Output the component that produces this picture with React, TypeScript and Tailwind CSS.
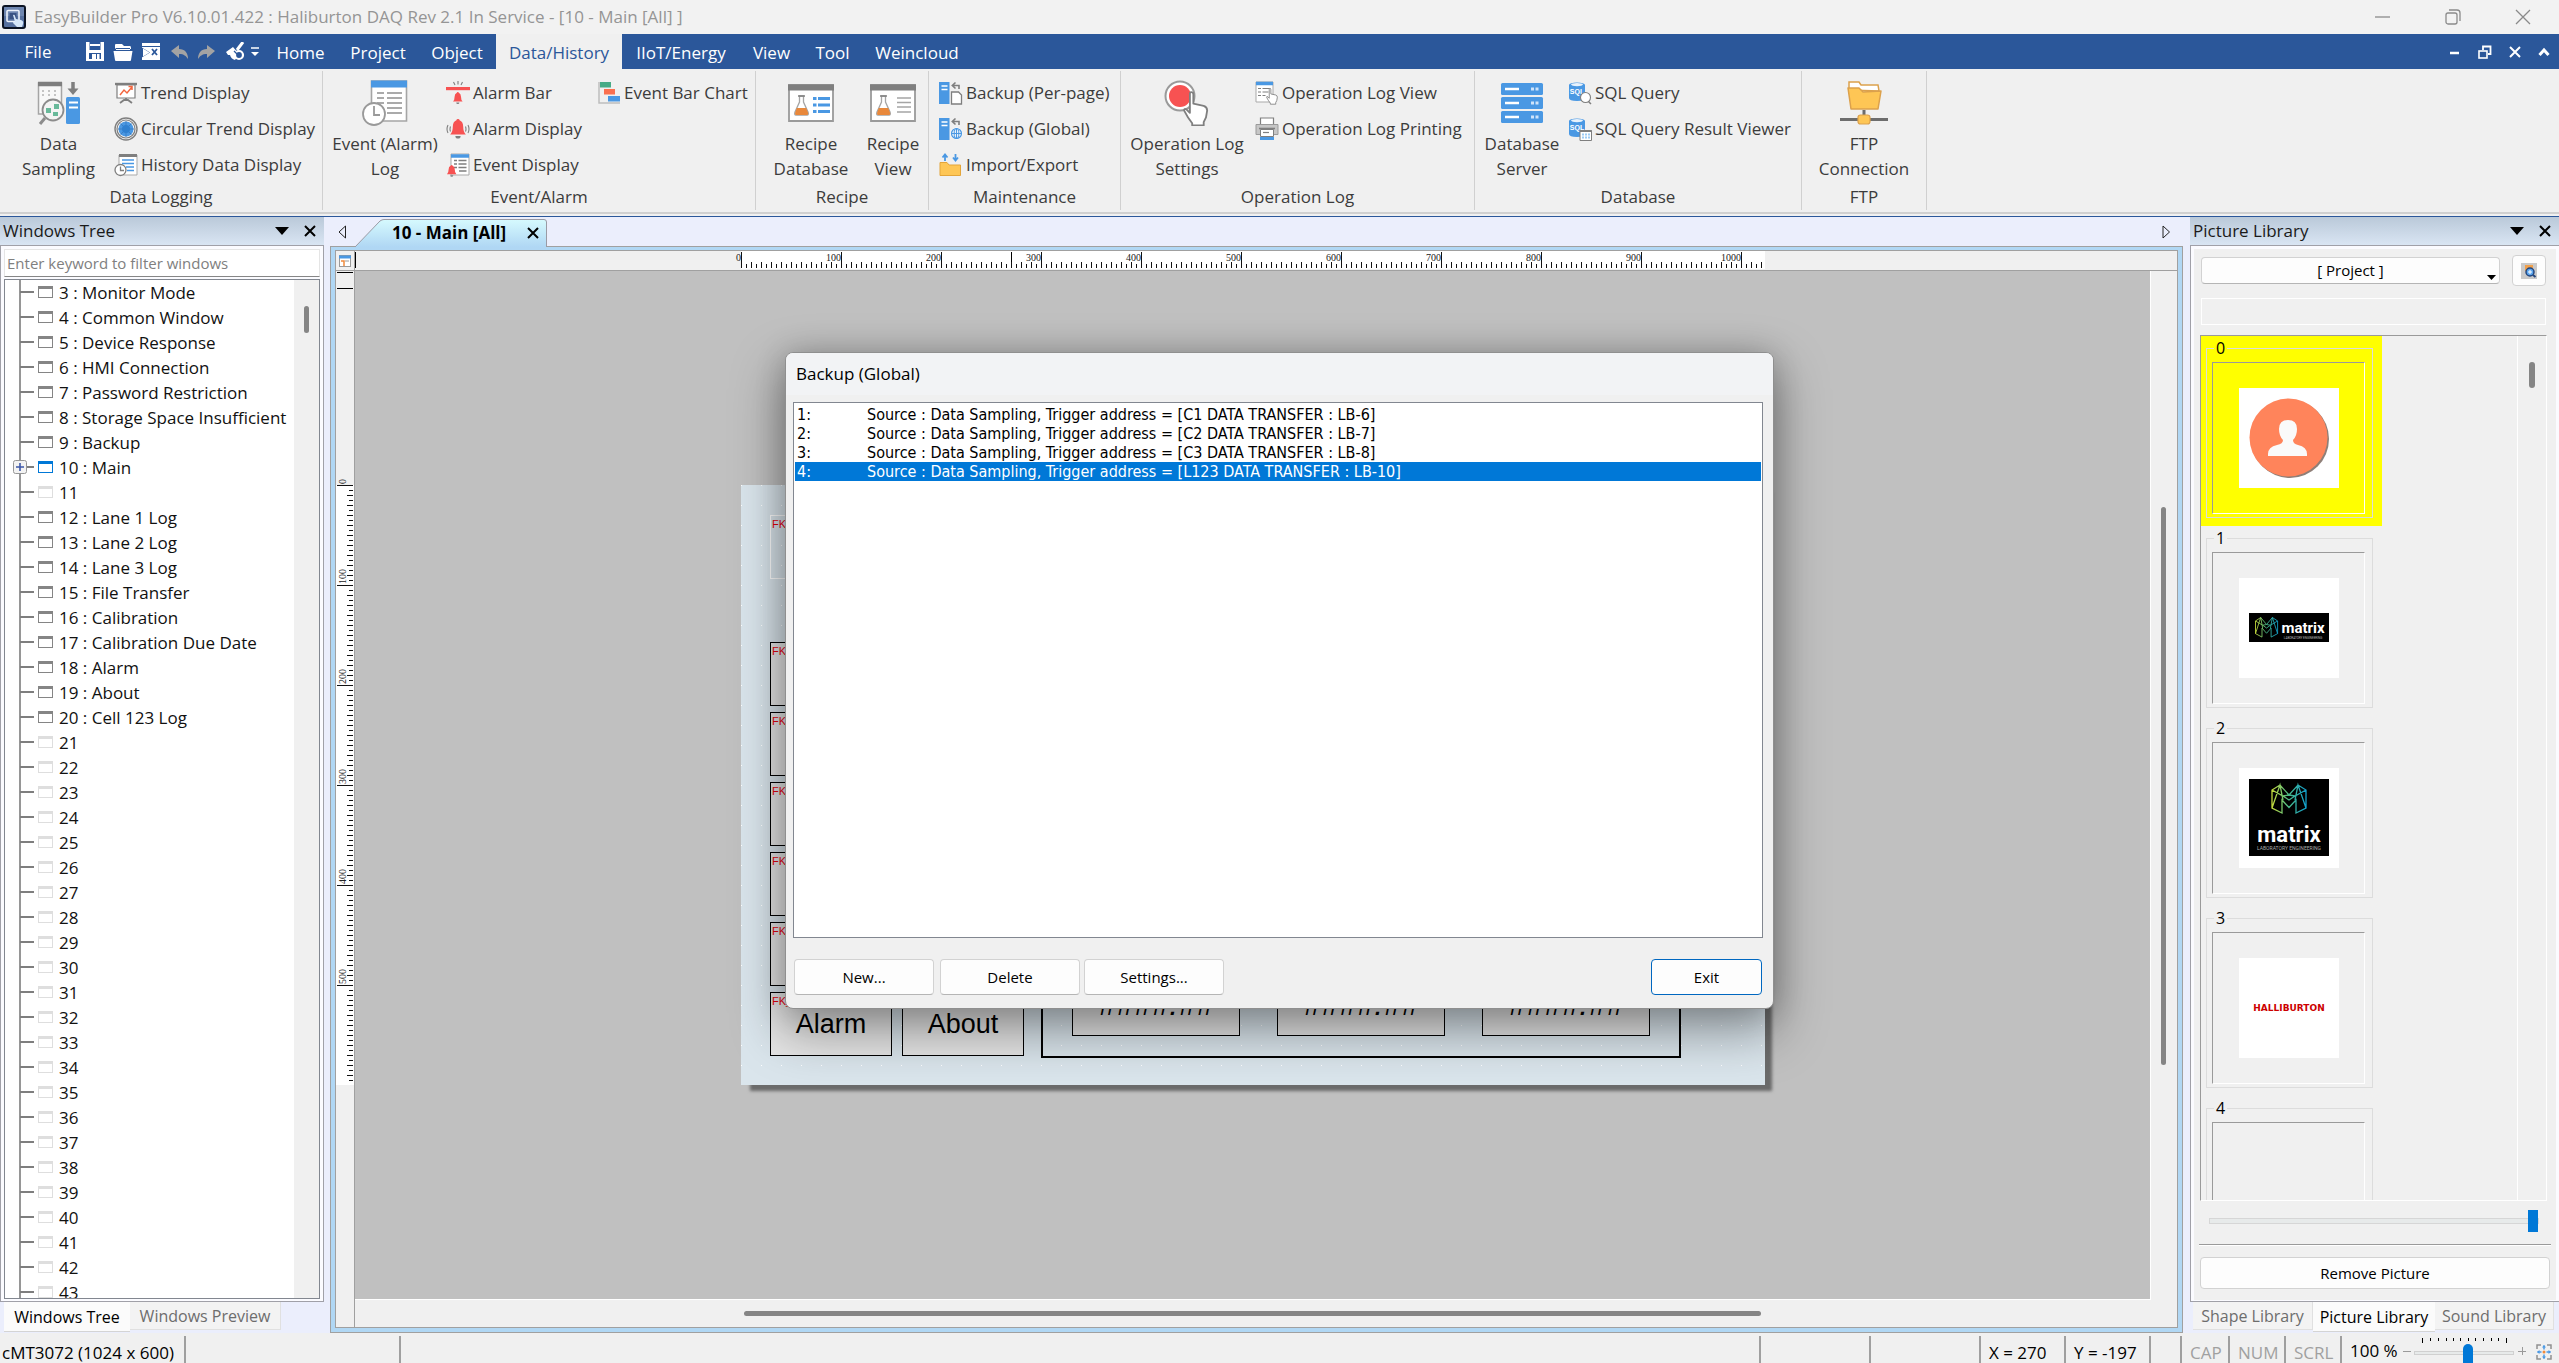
import React from "react";

type Kids = { children?: React.ReactNode };

/* ---------- icon helpers ---------- */

function Svg({ w, h, box, children }: Kids & { w: number; h: number; box?: string }) {
  return (
    <svg width={w} height={h} viewBox={box ?? `0 0 ${w} ${h}`} className="block shrink-0" aria-hidden="true">
      {children}
    </svg>
  );
}

const GREY = "#7f7f7f";
const BLUE = "#4a98e3";
const RED = "#f75252";

const AppIcon = () => (
  <Svg w={24} h={24}>
    <rect x="1" y="1" width="22" height="22" rx="2" fill="#56709f" stroke="#0c1424" strokeWidth="2" />
    <rect x="2" y="2" width="20" height="9" fill="#7f95bd" opacity=".6" />
    <rect x="5" y="5.500" width="12" height="11" rx="1" fill="none" stroke="#eef3fb" strokeWidth="1.600" />
    <rect x="7.500" y="8" width="7" height="6" fill="#3a5384" />
    <path d="M11 10q1.500-1 2 1l1 3 5 1q3 1 2 4l-1 3h-5l-4-4q0-2 2-1z" fill="#d5e6f8" />
  </Svg>
);

const SaveIcon = () => (
  <Svg w={20} h={19}>
    <path d="M1 0h18v19H1z" fill="#fff" />
    <rect x="4.500" y="0" width="11" height="8" fill="#2b579a" />
    <rect x="5" y="2" width="10" height="2" fill="#fff" />
    <rect x="4" y="11" width="12" height="6" fill="#2b579a" />
    <rect x="12" y="12" width="2.500" height="5" fill="#fff" />
    <rect x="7" y="12" width="4" height="5" fill="#fff" />
  </Svg>
);
const OpenIcon = () => (
  <Svg w={20} h={18}>
    <path d="M2 5V2q0-1 1-1h6l2 2h6q1 0 1 2v1h-1V5H3v1z" fill="#fff" />
    <path d="M3 6h14v1H3z" fill="#fff" />
    <path d="M.5 8h19L18 17q0 1-1 1H3q-1 0-1-1z" fill="#fff" />
  </Svg>
);
const CloseProjectIcon = () => (
  <Svg w={20} h={19}>
    <path d="M1 1h18v17H1z" fill="#fff" />
    <path d="M1 4.500h18" stroke="#2b579a" />
    <path d="M0 5l9 5.500L0 16z" fill="#2b579a" />
    <path d="M2 6.500l6.500 4L2 14.500z" fill="#fff" />
    <path d="M11 7l5 6m0-6l-5 6" stroke="#2b579a" strokeWidth="1.800" />
  </Svg>
);
const UndoIcon = ({ flip }: { flip?: boolean }) => (
  <Svg w={18} h={16}>
    <g transform={flip ? "translate(18 0) scale(-1 1)" : undefined}>
      <path d="M0 7L8 1v4c6 0 9 4 9 10-2-3-4-5-9-5v4z" fill="#a3a3a3" />
    </g>
  </Svg>
);
const BrushIcon = () => (
  <Svg w={20} h={19}>
    <path d="M18 0l-6 8" stroke="#fff" strokeWidth="3" />
    <path d="M1 10l7-5 6 7-4 6q-4-1-5-5l-2 0z" fill="#fff" />
    <circle cx="14" cy="13" r="4" fill="#2b579a" stroke="#fff" strokeWidth="2.200" />
    <path d="M9 9l3 3" stroke="#2b579a" strokeWidth="1.200" />
  </Svg>
);

const TrendIcon = () => (
  <Svg w={24} h={24}>
    <path d="M1 3h22" stroke={GREY} strokeWidth="2.400" />
    <path d="M3 4v13h18V4z" fill="#fff" stroke={GREY} strokeWidth="1.200" />
    <path d="M6 14l4-5 3 3 5-6M14.500 5.500H18V9" fill="none" stroke="#f3663f" strokeWidth="1.500" />
    <path d="M12 17v2M6 22l4-3h4l4 3" fill="none" stroke={GREY} strokeWidth="1.800" />
  </Svg>
);
const CircularIcon = () => (
  <Svg w={24} h={24}>
    <circle cx="12" cy="12" r="11" fill="#f4f4f4" stroke={GREY} strokeWidth="1.400" />
    <circle cx="12" cy="12" r="9" fill="none" stroke={GREY} strokeWidth="1.200" />
    <circle cx="12" cy="12" r="7.500" fill={BLUE} />
    <path d="M12 4v16M4 12h16M6.500 6.500l11 11M17.500 6.500l-11 11" stroke="#3672b4" strokeWidth=".7" />
    <circle cx="12" cy="12" r="4" fill="#2f80d0" />
  </Svg>
);
const HistoryIcon = () => (
  <Svg w={24} h={24}>
    <path d="M5 2h18v20H5z" fill="#fff" stroke="#a9a9a9" />
    <path d="M5 2.500h18" stroke={GREY} strokeWidth="3" />
    <path d="M8 7h12M8 10.500h12M12 14h8M13 17.500h7" stroke={BLUE} strokeWidth="1.300" />
    <circle cx="6.500" cy="17" r="5.500" fill="#fff" stroke={GREY} strokeWidth="1.300" />
    <path d="M6.500 13.500V17.500H10" fill="none" stroke={GREY} strokeWidth="1.300" />
  </Svg>
);
const Bell = ({ t }: { t: string }) => (
  <g transform={t}>
    <path d="M6 0q1.200 0 1.200 1Q10 2 10 6q0 4 2 6H0q2-2 2-6 0-4 2.800-5Q4.800 0 6 0z" fill={RED} />
    <path d="M4 13h4q0 2-2 2t-2-2z" fill={GREY} />
  </g>
);
const AlarmBarIcon = () => (
  <Svg w={24} h={24}>
    <path d="M12 0v3.500M7.500 1l1.500 3M16.500 1L15 4" stroke={GREY} strokeWidth="1.100" />
    <rect x="0" y="6" width="24" height="3.200" fill={RED} />
    <Bell t="translate(7 11) scale(.8)" />
  </Svg>
);
const AlarmDisplayIcon = () => (
  <Svg w={24} h={24}>
    <Bell t="translate(4.200 2) scale(1.300)" />
    <path d="M2 8q-2 4 0 8M4.500 9.500q-1 3 0 5M22 8q2 4 0 8M19.500 9.500q1 3 0 5" fill="none" stroke={GREY} strokeWidth="1.100" />
  </Svg>
);
const EventDisplayIcon = () => (
  <Svg w={24} h={24}>
    <path d="M5 1h18v21H5z" fill="#fff" stroke="#a9a9a9" />
    <path d="M5 3h18" stroke={BLUE} strokeWidth="3.500" />
    <path d="M8 7.500h3M12.500 7.500h8M8 11h3M12.500 11h8M8 14.500h3M12.500 14.500h8M13 18h7.500" stroke={GREY} strokeWidth="1.300" />
    <Bell t="translate(1 12) scale(.78)" />
  </Svg>
);
const BarChartIcon = () => (
  <Svg w={24} h={24}>
    <path d="M2 1v21h21" fill="none" stroke="#bdbdbd" strokeWidth="1.500" />
    <rect x="3" y="1" width="11" height="5.500" fill="#47ab86" />
    <rect x="7" y="8" width="11" height="5.500" fill="#fa7050" />
    <rect x="11" y="15" width="12" height="5.500" fill={BLUE} />
  </Svg>
);
const BackupIcon = ({ global }: { global?: boolean }) => (
  <Svg w={24} h={24}>
    <rect x="0" y="1" width="10.500" height="22" fill={BLUE} />
    <path d="M2.500 5h6M2.500 8.500h6" stroke="#fff" strokeWidth="1.700" />
    <path d="M20 8V4.500h-6M16.500 1.500l-3.200 3 3.200 3" fill="none" stroke={GREY} strokeWidth="1.600" />
    {global ? (
      <>
        <circle cx="17.500" cy="16.500" r="6" fill="#fff" />
        <circle cx="17.500" cy="16.500" r="5" fill="#e7f1fb" stroke={BLUE} strokeWidth="1.200" />
        <ellipse cx="17.500" cy="16.500" rx="2.300" ry="5" fill="none" stroke={BLUE} />
        <path d="M12.500 16.500h10M17.500 11.500v10" stroke={BLUE} />
      </>
    ) : (
      <path d="M12.500 11h7l3 3v9h-10z" fill="#fff" stroke={GREY} strokeWidth="1.300" />
    )}
  </Svg>
);
const ImportIcon = () => (
  <Svg w={24} h={24}>
    <path d="M6 8V2M3.500 4.500L6 1.500l2.500 3M16.500 1v6M14 4.500l2.500 3 2.500-3" fill="none" stroke={BLUE} strokeWidth="1.800" />
    <path d="M1 9.500h7l2 2.500h11.500v10.500H1z" fill="#fec655" stroke="#e3a53a" />
  </Svg>
);
const Hand = ({ t }: { t: string }) => (
  <path
    transform={t}
    d="M7 1q2 0 2 2v8l9 2q3 1 3 4l-1 6-2 4v3H8v-2q-4-5-7-11 0-3 3 0l2 2V3q0-2 1-2z"
    fill="#fff"
    stroke={GREY}
    strokeWidth="1.600"
    strokeLinejoin="round"
  />
);
const OpViewIcon = () => (
  <Svg w={24} h={24}>
    <path d="M1 1h17v20H1z" fill="#fff" stroke="#a9a9a9" />
    <path d="M1 2.500h17" stroke={BLUE} strokeWidth="3.500" />
    <path d="M3 7.500h3M7.500 7.500h8M3 11h3M7.500 11h6M3 14.500h3M7.500 14.500h3" stroke={GREY} strokeWidth="1.200" />
    <Hand t="translate(11 7) scale(.54)" />
  </Svg>
);
const PrinterIcon = () => (
  <Svg w={24} h={24}>
    <path d="M5.500 1h13v7h-13z" fill="#fff" stroke={GREY} strokeWidth="1.200" />
    <path d="M1 7.500h22v10H1z" fill="#c6c6c6" stroke="#9a9a9a" />
    <path d="M4 11.500h16" stroke={GREY} strokeWidth="1.600" />
    <path d="M5.500 12.500h13v7h-13z" fill="#fff" stroke={GREY} />
    <path d="M8 15.500h6" stroke={GREY} strokeWidth="1.200" />
    <rect x="5" y="20" width="14" height="3" fill={BLUE} />
  </Svg>
);
const SqlIcon = ({ table }: { table?: boolean }) => (
  <Svg w={24} h={24}>
    <path d="M1 4v13q0 3 8 3t8-3V4z" fill={BLUE} />
    <ellipse cx="9" cy="4" rx="8" ry="2.600" fill={BLUE} />
    <ellipse cx="9" cy="3.600" rx="6" ry="1.600" fill="#e8f2fc" />
    <text x="9" y="13" fontSize="7" fontWeight="bold" textAnchor="middle" fill="#fff" fontFamily="Liberation Sans">
      SQL
    </text>
    {table ? (
      <>
        <path d="M12 13.500h11.500v10H12z" fill="#fff" stroke={GREY} />
        <path d="M12 14h11.500" stroke={GREY} strokeWidth="2" />
        <path d="M14 17.500h8M14 20.500h8" stroke="#9ccbf5" strokeWidth="2" strokeDasharray="2 1" />
      </>
    ) : (
      <>
        <circle cx="17.500" cy="16.500" r="5" fill="#fff" stroke={GREY} strokeWidth="1.100" />
        <path d="M20.500 20.500l2.500 2.500" stroke={GREY} strokeWidth="1.500" />
      </>
    )}
  </Svg>
);

const SamplingBig = () => (
  <Svg w={44} h={44}>
    <path d="M1.500 2h23v31h-23z" fill="#f8f8f8" stroke="#a5a5a5" strokeWidth="1.500" />
    <path d="M1 3h24" stroke={GREY} strokeWidth="4.500" />
    <path d="M5 10h17M5 14h17" stroke="#c4c4c4" strokeWidth="2" strokeDasharray="2 4" />
    <path d="M36 1v9" stroke={GREY} strokeWidth="3.500" />
    <path d="M30.500 7.500h11L36 14z" fill={GREY} />
    <rect x="29" y="16" width="14" height="27" rx="1.500" fill={BLUE} />
    <path d="M32 21.500h9M32 26.500h9" stroke="#fff" strokeWidth="1.800" />
    <circle cx="16" cy="29" r="10.500" fill="#f4f4f4" stroke="#8c8c8c" strokeWidth="1.800" />
    <path d="M8 37l-5 6" stroke="#8c8c8c" strokeWidth="3" />
    <path d="M17 23h5v5h-5zM9 27h5v5H9zM16 31h5v4h-5z" fill="#68b99a" />
  </Svg>
);
const EventBig = () => (
  <Svg w={46} h={46}>
    <path d="M9.500 1h35v40h-35z" fill="#fff" stroke="#a5a5a5" strokeWidth="1.600" />
    <path d="M9 4h36" stroke={BLUE} strokeWidth="7" />
    <path d="M15 13h7M25 13h15M15 18h7M25 18h15M15 23h7M25 23h15M25 28h15M25 33h15" stroke="#8e8e8e" strokeWidth="1.500" />
    <circle cx="12" cy="34" r="11" fill="#fff" stroke="#9a9a9a" strokeWidth="1.800" />
    <path d="M12 26v9h6" fill="none" stroke="#9a9a9a" strokeWidth="1.800" />
  </Svg>
);
const RecipeBig = ({ list }: { list?: boolean }) => (
  <Svg w={46} h={38}>
    <path d="M1 1h44v36H1z" fill="#fff" stroke="#9a9a9a" strokeWidth="1.800" />
    <path d="M0 3.500h46" stroke={GREY} strokeWidth="6" />
    <path d="M11.500 12v6L7 28q-1 3 1 3h11q2 0 1-3l-4.500-10v-6z" fill="#fff" stroke="#a5a5a5" strokeWidth="1.300" />
    <path d="M10 12h7" stroke={GREY} strokeWidth="1.500" />
    <path d="M8.800 24h9.400l2 5q0 2-1 2H8q-1 0-1-2z" fill="#e8883b" />
    {list ? (
      <path d="M25 14.500h3.500M30 14.500h12M25 21h3.500M30 21h12M25 27.500h3.500M30 27.500h12" stroke={BLUE} strokeWidth="3" />
    ) : (
      <path d="M27 14h14M27 18.500h14M27 23h14M27 28h14" stroke="#a5a5a5" strokeWidth="1.500" />
    )}
  </Svg>
);
const OpLogBig = () => (
  <Svg w={46} h={46}>
    <circle cx="16" cy="16" r="14.500" fill="#fff" stroke="#9a9a9a" strokeWidth="2" />
    <circle cx="16" cy="16" r="11" fill={RED} />
    <Hand t="translate(19 11) scale(1.150)" />
  </Svg>
);
const ServerBig = () => (
  <Svg w={44} h={42}>
    {[1, 15, 29].map((y) => (
      <g key={y}>
        <rect x="1" y={y} width="42" height="12" rx="1.500" fill={BLUE} />
        <path d={`M5 ${y + 6}h14`} stroke="#fff" strokeWidth="2.500" />
        <path d={`M31 ${y + 6}h3M35.500 ${y + 6}h3`} stroke="#cfe4fa" strokeWidth="3" />
      </g>
    ))}
  </Svg>
);
const FtpBig = () => (
  <Svg w={48} h={46}>
    <path d="M9 10V2h10l2 3h17l1 6z" fill="#fff" stroke="#dca14c" strokeWidth="1.500" />
    <path d="M8 8h11l4 4 18-1-3 18H11z" fill="#fec655" stroke="#dca14c" strokeWidth="1.500" strokeLinejoin="round" />
    <path d="M24 30v5" stroke="#6d6d6d" strokeWidth="3" />
    <path d="M0 39.500h48" stroke="#6d6d6d" strokeWidth="3" />
    <rect x="18" y="35" width="12" height="9" rx="2.500" fill="#fec655" stroke="#dca14c" strokeWidth="1.200" />
  </Svg>
);

const XMark = () => (
  <Svg w={12} h={12}>
    <path d="M1 1l10 10M11 1L1 11" stroke="#000" strokeWidth="2" />
  </Svg>
);
const Caret = () => (
  <Svg w={14} h={8}>
    <path d="M0 0h14L7 8z" fill="#000" />
  </Svg>
);

/* ---------- ribbon ---------- */

function Big({ icon, lines, cls }: { icon: React.ReactNode; lines: string[]; cls: string }) {
  return (
    <button className={`flex shrink-0 flex-col items-center ${cls}`}>
      <span className="flex h-14 items-center justify-center">{icon}</span>
      {lines.map((l) => (
        <span key={l} className="leading-[25px] whitespace-nowrap">
          {l}
        </span>
      ))}
    </button>
  );
}
function Small({ icon, text }: { icon: React.ReactNode; text: string }) {
  return (
    <button className="flex h-9 items-center gap-[3px] whitespace-nowrap">
      {icon}
      {text}
    </button>
  );
}
function Group({ title, cls, children }: Kids & { title: string; cls: string }) {
  return (
    <section className={`my-[2px] flex shrink-0 flex-col border-r border-[#d0d0d0] pt-[4px] ${cls}`}>
      <div className="flex h-[109px] items-start">{children}</div>
      <h2 className="text-center leading-[26px]">{title}</h2>
    </section>
  );
}

function Ribbon() {
  return (
    <div className="flex h-[145px] shrink-0 overflow-hidden border-b-2 border-[#d0d0d0] bg-[#f0f0f0] text-[17px] text-[#3c3c3c]">
      <Group title="Data Logging" cls="w-[323px]">
        <Big icon={<SamplingBig />} lines={["Data", "Sampling"]} cls="ml-[7px] w-[103px]" />
        <div className="ml-[4px] flex flex-col items-start">
          <Small icon={<TrendIcon />} text="Trend Display" />
          <Small icon={<CircularIcon />} text="Circular Trend Display" />
          <Small icon={<HistoryIcon />} text="History Data Display" />
        </div>
      </Group>
      <Group title="Event/Alarm" cls="w-[433px]">
        <Big icon={<EventBig />} lines={["Event (Alarm)", "Log"]} cls="ml-[7px] w-[110px]" />
        <div className="ml-[6px] flex w-[151px] flex-col items-start">
          <Small icon={<AlarmBarIcon />} text="Alarm Bar" />
          <Small icon={<AlarmDisplayIcon />} text="Alarm Display" />
          <Small icon={<EventDisplayIcon />} text="Event Display" />
        </div>
        <Small icon={<BarChartIcon />} text="Event Bar Chart" />
      </Group>
      <Group title="Recipe" cls="w-[173px]">
        <Big icon={<RecipeBig list />} lines={["Recipe", "Database"]} cls="ml-[15px] w-[80px]" />
        <Big icon={<RecipeBig />} lines={["Recipe", "View"]} cls="ml-[9px] w-[66px]" />
      </Group>
      <Group title="Maintenance" cls="w-[192px]">
        <div className="ml-[10px] flex flex-col items-start">
          <Small icon={<BackupIcon />} text="Backup (Per-page)" />
          <Small icon={<BackupIcon global />} text="Backup (Global)" />
          <Small icon={<ImportIcon />} text="Import/Export" />
        </div>
      </Group>
      <Group title="Operation Log" cls="w-[354px]">
        <Big icon={<OpLogBig />} lines={["Operation Log", "Settings"]} cls="ml-[4px] w-[124px]" />
        <div className="ml-[6px] flex flex-col items-start">
          <Small icon={<OpViewIcon />} text="Operation Log View" />
          <Small icon={<PrinterIcon />} text="Operation Log Printing" />
        </div>
      </Group>
      <Group title="Database" cls="w-[327px]">
        <Big icon={<ServerBig />} lines={["Database", "Server"]} cls="ml-[5px] w-[84px]" />
        <div className="ml-[4px] flex flex-col items-start">
          <Small icon={<SqlIcon />} text="SQL Query" />
          <Small icon={<SqlIcon table />} text="SQL Query Result Viewer" />
        </div>
      </Group>
      <Group title="FTP" cls="w-[125px]">
        <Big icon={<FtpBig />} lines={["FTP", "Connection"]} cls="w-full" />
      </Group>
    </div>
  );
}

function TitleBar() {
  return (
    <header className="flex h-[34px] shrink-0 items-center bg-[#f2f2f2] pl-[2px] text-[17px] text-[#959595]">
      <AppIcon />
      <h1 className="ml-2">EasyBuilder Pro V6.10.01.422 : Haliburton DAQ Rev 2.1 In Service - [10 - Main [All] ]</h1>
      <div className="mr-[28px] ml-auto flex items-center gap-[54px]">
        <button aria-label="Minimize">
          <Svg w={16} h={16}>
            <path d="M0 8h15" stroke="#8a8a8a" strokeWidth="1.300" />
          </Svg>
        </button>
        <button aria-label="Restore">
          <Svg w={16} h={16}>
            <rect x="1" y="4" width="11" height="11" rx="2" fill="none" stroke="#8a8a8a" strokeWidth="1.300" />
            <path d="M4 1h8q3 0 3 3v8" fill="none" stroke="#8a8a8a" strokeWidth="1.300" />
          </Svg>
        </button>
        <button aria-label="Close">
          <Svg w={16} h={16}>
            <path d="M1 1l14 14M15 1L1 15" stroke="#8a8a8a" strokeWidth="1.300" />
          </Svg>
        </button>
      </div>
    </header>
  );
}

const MENU = [
  { t: "Home", c: "w-[75px]" },
  { t: "Project", c: "w-[80px]" },
  { t: "Object", c: "w-[78px]" },
  { t: "Data/History", c: "w-[126px] bg-[#f0f0f0] text-[#2b579a]" },
  { t: "IIoT/Energy", c: "w-[118px]" },
  { t: "View", c: "w-[63px]" },
  { t: "Tool", c: "w-[59px]" },
  { t: "Weincloud", c: "w-[110px]" },
];

function MenuBar() {
  return (
    <nav className="flex h-[35px] shrink-0 items-stretch bg-[#2b579a] text-[17px] text-white">
      <button className="w-[76px] pt-px">File</button>
      <div className="ml-[9px] flex w-[178px] items-center gap-2">
        <button aria-label="Save"><SaveIcon /></button>
        <button aria-label="Open"><OpenIcon /></button>
        <button aria-label="Close project"><CloseProjectIcon /></button>
        <button aria-label="Undo" className="ml-[2px]"><UndoIcon /></button>
        <button aria-label="Redo"><UndoIcon flip /></button>
        <button aria-label="Build" className="ml-[2px]"><BrushIcon /></button>
        <button aria-label="Customize" className="-ml-[2px]">
          <Svg w={8} h={10}>
            <path d="M0 1h8" stroke="#fff" strokeWidth="1.500" />
            <path d="M0 5h8L4 9z" fill="#fff" />
          </Svg>
        </button>
      </div>
      {MENU.map((m) => (
        <button key={m.t} className={`pt-[3px] ${m.c}`}>
          {m.t}
        </button>
      ))}
      <div className="mr-[9px] ml-auto flex items-center gap-[17px]">
        <button aria-label="Minimize window">
          <Svg w={12} h={14}><path d="M1 8h9" stroke="#fff" strokeWidth="2.500" /></Svg>
        </button>
        <button aria-label="Restore window">
          <Svg w={14} h={14}>
            <rect x="1" y="6" width="8" height="7" fill="none" stroke="#fff" strokeWidth="1.600" />
            <path d="M5 5V1.500h7.500V9H10" fill="none" stroke="#fff" strokeWidth="1.800" />
          </Svg>
        </button>
        <button aria-label="Close window">
          <Svg w={12} h={12}><path d="M1 1l10 10M11 1L1 11" stroke="#fff" strokeWidth="2" /></Svg>
        </button>
        <button aria-label="Collapse ribbon">
          <Svg w={12} h={12}><path d="M1.500 9L6 4l4.500 5" fill="none" stroke="#fff" strokeWidth="3" /></Svg>
        </button>
      </div>
    </nav>
  );
}

/* ---------- docks ---------- */

function DockHeader({ title }: { title: string }) {
  return (
    <div className="flex h-7 shrink-0 items-center bg-linear-to-b from-[#bac9d9] to-[#d9e5f3] pr-2 pl-[3px] text-[17px] text-[#1a1a1a]">
      <h2>{title}</h2>
      <button aria-label="Dock menu" className="mr-[15px] ml-auto"><Caret /></button>
      <button aria-label="Close dock"><XMark /></button>
    </div>
  );
}

const NAMES: Record<number, string> = {
  3: "Monitor Mode",
  4: "Common Window",
  5: "Device Response",
  6: "HMI Connection",
  7: "Password Restriction",
  8: "Storage Space Insufficient",
  9: "Backup",
  10: "Main",
  12: "Lane 1 Log",
  13: "Lane 2 Log",
  14: "Lane 3 Log",
  15: "File Transfer",
  16: "Calibration",
  17: "Calibration Due Date",
  18: "Alarm",
  19: "About",
  20: "Cell 123 Log",
};
const ROWS = Array.from({ length: 41 }, (_, i) => i + 3);

function TreeGlyph({ n }: { n: number }) {
  const c = n === 10 ? "#0078d7" : NAMES[n] ? "#858585" : "#dedede";
  return (
    <Svg w={48} h={25}>
      <path d="M15 0v25" stroke="#969696" strokeWidth="2" />
      <path d="M15 12h14" stroke="#7e7e7e" strokeWidth="2" />
      <rect x="33.500" y="6.500" width="14" height="11" fill="#fff" stroke={c} />
      <path d="M33 7.500h15" stroke={c} strokeWidth="3" />
      {n === 10 && (
        <>
          <rect x="8.500" y="5.500" width="13" height="13" rx="2" fill="#f3f3f3" stroke="#969696" />
          <path d="M11 12h8M15 8v8" stroke="#3c57a8" strokeWidth="1.600" />
        </>
      )}
    </Svg>
  );
}

function LeftDock() {
  return (
    <aside className="flex w-[324px] shrink-0 flex-col pb-px">
      <DockHeader title="Windows Tree" />
      <div className="flex min-h-0 flex-1 flex-col border border-[#a0a0a8] bg-[#fbfbff] px-[3px] pt-[3px] pb-[2px]">
        <input
          type="text"
          aria-label="Filter windows"
          placeholder="Enter keyword to filter windows"
          className="h-7 shrink-0 border border-b-[#868686] border-[#e5e5e5] bg-white px-[2px] text-[15px] outline-none placeholder:text-[#808080]"
        />
        <div className="mt-[2px] flex min-h-0 flex-1 overflow-hidden border border-[#828790] bg-white">
          <ul className="min-w-0 flex-1 overflow-hidden text-[17px] text-[#111]">
            {ROWS.map((n) => (
              <li key={n} className="flex h-[25px] items-center gap-[6px] whitespace-nowrap">
                <TreeGlyph n={n} />
                <span>{NAMES[n] ? `${n} : ${NAMES[n]}` : n}</span>
              </li>
            ))}
          </ul>
          <div className="flex w-[25px] justify-center bg-[#f0f0f0] pt-[26px]">
            <div className="h-[27px] w-[5px] rounded-full bg-[#858585]" />
          </div>
        </div>
      </div>
      <div className="flex h-[30px] shrink-0 items-start pl-1 text-[16px]">
        <button className="h-[30px] w-[126px] border-b border-[#d4d4d4] bg-[#fbfbfb] text-black">Windows Tree</button>
        <button className="h-[28px] w-[151px] border-r border-b border-[#e0e0e0] bg-[#f3f3f3] text-[#6d6d6d]">Windows Preview</button>
      </div>
    </aside>
  );
}

/* Ruler ticks: short marks every 5 units, taller every 10, a full mark with its number every 100. */
function TopRuler() {
  const ticks: React.ReactNode[] = [];
  for (let v = 0; v <= 1020; v += 5) {
    const x = v + 0.5;
    const top = v % 100 === 0 ? 1 : v % 10 === 0 ? 11 : 13;
    ticks.push(<path key={v} d={`M${x} ${top}V17`} stroke="#111" />);
    if (v % 100 === 0)
      ticks.push(
        <text key={`t${v}`} x={v} y="10" fontSize="10" textAnchor="end" fill="#222" fontFamily="Liberation Serif">
          {v}
        </text>,
      );
  }
  return (
    <svg className="block h-[18px] w-full overflow-hidden" aria-hidden="true">
      <path d="M.5 1V17" stroke="#000" />
      <svg x="386" overflow="visible">
        <rect width="1024" height="18" fill="#fff" />
        {ticks}
        <path d="M270.500 1V11" stroke="#000" />
      </svg>
    </svg>
  );
}
function SideRuler() {
  const ticks: React.ReactNode[] = [];
  for (let v = 0; v < 600; v += 5) {
    const y = v + 0.5;
    const left = v % 100 === 0 ? 1 : v % 10 === 0 ? 11 : 13;
    ticks.push(<path key={v} d={`M${left} ${y}H17`} stroke="#111" />);
    if (v % 100 === 0)
      ticks.push(
        <text key={`t${v}`} transform={`translate(10 ${v - 1}) rotate(-90)`} fontSize="10" fill="#222" fontFamily="Liberation Serif">
          {v}
        </text>,
      );
  }
  return (
    <svg className="block h-full w-[18px] overflow-hidden" aria-hidden="true">
      <path d="M1 1.500H17M1 17.500H17" stroke="#000" />
      <svg y="214" overflow="visible">
        <rect width="18" height="600" fill="#fff" />
        {ticks}
      </svg>
    </svg>
  );
}

const PADS = ["top-[157px]", "top-[227px]", "top-[297px]", "top-[367px]", "top-[437px]"];
const METERS = ["left-[331px]", "left-[536px]", "left-[741px]"];

/* The HMI page being edited: objects are freely placed on it. */
function HmiPage() {
  return (
    <div className="absolute top-[214px] left-[386px] h-[600px] w-[1024px] bg-[#dae5ec] bg-[radial-gradient(circle_at_0.5px_0.5px,#fff_1px,transparent_1px)] bg-[size:20px_20px] font-['Liberation_Sans',sans-serif] text-[27px] text-black shadow-[8px_7px_3px_-1px_#6b6b6b]">
      <div className="absolute top-[30px] left-[29px] h-[64px] w-[122px] border border-white">
        <span className="block pl-px text-[11px] leading-[16px] text-red-600">FK_</span>
      </div>
      {PADS.map((p) => (
        <div key={p} className={`absolute left-[29px] h-[64px] w-[122px] border border-black bg-[#e6e6e6] ${p}`}>
          <span className="block pl-px text-[11px] leading-[16px] text-red-600">FK_</span>
        </div>
      ))}
      <div className="absolute top-[507px] left-[29px] h-[64px] w-[122px] border border-black bg-[#e6e6e6]">
        <span className="block pl-px text-[11px] leading-[16px] text-red-600">FK_</span>
        <span className="block text-center leading-[30px]">Alarm</span>
      </div>
      <div className="absolute top-[507px] left-[161px] h-[64px] w-[122px] border border-black bg-[#e6e6e6] pt-4 text-center leading-[30px]">
        About
      </div>
      <div className="absolute top-[30px] left-[300px] h-[543px] w-[640px] border-2 border-black" />
      {METERS.map((m) => (
        <div
          key={m}
          className={`absolute top-[487px] flex h-[64px] w-[168px] items-center justify-center border border-black bg-[#e6e6e6] text-[32px] italic ${m}`}
        >
          ####.##
        </div>
      ))}
    </div>
  );
}

function Editor() {
  return (
    <main className="ml-[6px] flex min-w-0 flex-1 flex-col">
      <div className="relative z-10 -mb-px flex h-[30px] shrink-0 items-end">
        <button aria-label="Previous tab" className="mb-[8px] ml-[8px]">
          <Svg w={8} h={14}><path d="M7.500 1v12L1 7z" fill="none" stroke="#222" /></Svg>
        </button>
        <div className="relative ml-[9px] flex h-[28px] w-[192px] items-center pl-[37px] text-[17px] font-bold">
          <svg width="192" height="28" className="absolute inset-0" aria-hidden="true">
            <defs>
              <linearGradient id="tab" x1="0" y1="0" x2="0" y2="1">
                <stop offset="0" stopColor="#d6fafe" />
                <stop offset="1" stopColor="#b0d7f4" />
              </linearGradient>
            </defs>
            <path d="M0 28L25 2q2-1.500 4-1.500h160q2.500 0 2.500 2.500V28" fill="url(#tab)" stroke="#9a9aa4" />
          </svg>
          <span className="relative">10 - Main [All]</span>
          <button aria-label="Close tab" className="relative mr-2 ml-auto"><XMark /></button>
        </div>
        <button aria-label="Next tab" className="mr-[13px] mb-[8px] ml-auto">
          <Svg w={8} h={14}><path d="M1 1v12l6.500-6z" fill="none" stroke="#222" /></Svg>
        </button>
      </div>
      <div className="flex min-h-0 flex-1 flex-col border border-[#a0a0a0] bg-[#b0d7f4] p-[4px] pt-[3px]">
        <div className="grid min-h-0 flex-1 grid-cols-[19px_1fr_26px] grid-rows-[20px_1fr_27px] border border-[#a0a0a0] bg-[#f0f0f0]">
          <div className="flex items-center justify-center border-r border-b border-[#a0a0a0]">
            <Svg w={12} h={12}>
              <rect x=".5" y=".5" width="11" height="11" fill="#fff" stroke="#9a9a9a" />
              <path d="M0 2h12" stroke={BLUE} strokeWidth="3" />
              <path d="M2 6h3v5" fill="none" stroke="#f08a3c" strokeWidth="1.500" />
              <path d="M6 6h4" stroke="#999" />
            </Svg>
          </div>
          <div className="col-span-2 border-b border-[#a0a0a0]"><TopRuler /></div>
          <div className="overflow-hidden border-r border-[#a0a0a0]"><SideRuler /></div>
          <div className="relative overflow-hidden border-r border-b border-white bg-[#c0c0c0]">
            <HmiPage />
          </div>
          <div className="flex justify-center pt-[236px] pr-px">
            <div className="h-[558px] w-[5px] rounded-full bg-[#858585]" />
          </div>
          <div className="border-r border-[#a0a0a0]" />
          <div className="flex items-start pt-[11px] pl-[389px]">
            <div className="h-[5px] w-[1017px] rounded-full bg-[#858585]" />
          </div>
          <div />
        </div>
      </div>
    </main>
  );
}

/* ---------- picture library ---------- */

const MatrixMark = () => (
  <g strokeWidth="1.300">
    <defs>
      <linearGradient id="mark" gradientUnits="userSpaceOnUse" x1="0" y1="0" x2="34" y2="0">
        <stop offset="0" stopColor="#c5da3c" />
        <stop offset=".5" stopColor="#48b98a" />
        <stop offset="1" stopColor="#12a0cc" />
      </linearGradient>
    </defs>
    <path
      d="M8 0L0 5V23L10 28V15L17 22.500 24 15V28L34 23V5L26 0 17 10zM0 5l11 6 6-1M0 23L8 0l3 15M34 5l-11 6-6-1M34 23L26 0l-3 15M11 11l6 4 6-4"
      fill="none"
      stroke="url(#mark)"
    />
  </g>
);

const PersonPic = () => (
  <Svg w={100} h={100}>
    <rect width="100" height="100" fill="#fff" />
    <ellipse cx="51" cy="51" rx="39" ry="39" fill="#8f7f78" />
    <ellipse cx="49.500" cy="49.500" rx="39" ry="39" fill="#ff845b" />
    <path
      d="M49 32q9 0 9 9 0 7-4 11 0 4 5 5 9 2 9 9v2H29v-2q0-7 9-9 6-1 6-5-4-4-4-11 0-9 9-9z"
      fill="#fafafa"
    />
  </Svg>
);
const MatrixWide = () => (
  <Svg w={100} h={100}>
    <rect width="100" height="100" fill="#fff" />
    <rect x="10" y="35" width="80" height="29" fill="#000" />
    <g transform="translate(16.500 39.500) scale(.65 .7)"><MatrixMark /></g>
    <text x="64" y="55" fontSize="15" fontWeight="bold" textAnchor="middle" fill="#fff" fontFamily="Roboto">matrix</text>
    <text x="64" y="61" fontSize="3" textAnchor="middle" fill="#bbb" fontFamily="Roboto">LABORATORY ENGINEERING</text>
  </Svg>
);
const MatrixTall = () => (
  <Svg w={100} h={100}>
    <rect width="100" height="100" fill="#fff" />
    <rect x="10" y="11" width="80" height="77" fill="#000" />
    <g transform="translate(33 17)"><MatrixMark /></g>
    <text x="50" y="74" fontSize="22" fontWeight="bold" textAnchor="middle" fill="#fff" fontFamily="Roboto">matrix</text>
    <text x="50" y="82" fontSize="5" textAnchor="middle" fill="#aaa" fontFamily="Roboto">LABORATORY ENGINEERING</text>
  </Svg>
);
const HalliburtonPic = () => (
  <Svg w={100} h={100}>
    <rect width="100" height="100" fill="#fff" />
    <text x="50" y="53" fontSize="9" fontWeight="bold" textAnchor="middle" fill="#cc0000" fontFamily="DejaVu Sans">HALLIBURTON</text>
  </Svg>
);

const PICS: { id: number; pic?: React.ReactNode }[] = [
  { id: 0, pic: <PersonPic /> },
  { id: 1, pic: <MatrixWide /> },
  { id: 2, pic: <MatrixTall /> },
  { id: 3, pic: <HalliburtonPic /> },
  { id: 4 },
];

function RightDock() {
  return (
    <aside className="ml-[7px] flex w-[369px] shrink-0 flex-col pb-px">
      <DockHeader title="Picture Library" />
      <div className="flex min-h-0 flex-1 flex-col border border-r-0 border-[#a0a0a8] bg-[#fbfbff] px-[3px] pt-[3px] pb-px">
        <div className="flex min-h-0 flex-1 flex-col bg-[#f0f0f0]">
          <div className="mt-[6px] flex items-center gap-3 pr-[10px] pl-[7px]">
            <div className="relative h-[27px] min-w-0 flex-1">
              <select
                aria-label="Library"
                className="h-full w-full appearance-none rounded border border-b-[#b5b5b5] border-[#d2d2d2] bg-[#fdfdfd] text-center text-[15px] [text-align-last:center]"
              >
                <option>[ Project ]</option>
              </select>
              <span className="pointer-events-none absolute right-[4px] bottom-[4px]">
                <Svg w={9} h={5}><path d="M0 0h9L4.500 5z" /></Svg>
              </span>
            </div>
            <button aria-label="Browse pictures" className="flex h-[31px] w-[34px] items-center justify-center rounded border border-[#d2d2d2] bg-[#fdfdfd]">
              <Svg w={16} h={16}>
                <rect width="16" height="16" fill="#c9c9c9" />
                <path d="M4 2h8v6H4z" fill="#f0a04b" />
                <circle cx="9" cy="9" r="4" fill="#5aa5ee" stroke="#24457c" strokeWidth="1.500" />
                <path d="M7 9h4M9 7v4" stroke="#fff" />
                <path d="M12 12l2.500 2" stroke="#24457c" strokeWidth="2" />
              </Svg>
            </button>
          </div>
          <div className="mt-[12px] mr-[10px] ml-[7px] h-[27px] shrink-0 border border-white" />
          <div className="mt-[10px] mr-[9px] ml-[6px] flex min-h-0 flex-1 overflow-hidden border-t border-r border-b border-l border-t-[#9a9a9a] border-r-white border-b-white border-l-[#9a9a9a]">
            <ul className="h-0 min-w-0 flex-1 text-[16px]">
              {PICS.map((p) => (
                <li key={p.id} className={`h-[190px] w-[181px] px-[5px] pt-[2px] pb-[8px] ${p.id === 0 ? "bg-[#ffff00]" : ""}`}>
                  <fieldset className="h-[180px] w-[167px] border border-[#dcdcdc] pt-[4px] pr-[7px] pl-[5px]">
                    <legend className="ml-[2px] px-[2px] leading-[20px]">{p.id}</legend>
                    <div className="flex h-[152px] items-center justify-center border border-t-[#9a9a9a] border-r-white border-b-white border-l-[#9a9a9a]">
                      {p.pic}
                    </div>
                  </fieldset>
                </li>
              ))}
            </ul>
            <div className="flex w-[29px] justify-center border-l border-white pt-[26px]">
              <div className="h-[26px] w-[6px] rounded-full bg-[#858585]" />
            </div>
          </div>
          <input
            type="range"
            aria-label="Thumbnail size"
            min={0}
            max={100}
            defaultValue={100}
            className="mt-[8px] mr-[17px] ml-[15px] h-[24px] appearance-none bg-transparent [&::-webkit-slider-runnable-track]:h-[6px] [&::-webkit-slider-runnable-track]:border [&::-webkit-slider-runnable-track]:border-[#d6d6d6] [&::-webkit-slider-runnable-track]:bg-[#e7eaea] [&::-webkit-slider-thumb]:-mt-[9px] [&::-webkit-slider-thumb]:h-[22px] [&::-webkit-slider-thumb]:w-[10px] [&::-webkit-slider-thumb]:appearance-none [&::-webkit-slider-thumb]:bg-[#0078d7]"
          />
          <div className="mx-[5px] mt-[11px] border-t border-b border-t-[#9a9a9a] border-b-white" />
          <button className="mx-[6px] mt-[11px] mb-[11px] h-[32px] shrink-0 rounded border border-[#d2d2d2] bg-[#fdfdfd] text-[15px]">
            Remove Picture
          </button>
        </div>
      </div>
      <div className="flex h-[30px] shrink-0 items-start pl-[3px] text-[16px] whitespace-nowrap">
        <button className="h-[28px] w-[120px] border-r border-b border-[#e0e0e0] bg-[#f3f3f3] text-[#6d6d6d]">Shape Library</button>
        <button className="h-[30px] w-[122px] border-b border-[#d4d4d4] bg-[#fbfbfb] text-black">Picture Library</button>
        <button className="h-[28px] w-[119px] border-r border-b border-[#e0e0e0] bg-[#f3f3f3] text-[#6d6d6d]">Sound Library</button>
      </div>
    </aside>
  );
}

/* ---------- status bar ---------- */

function Cell({ cls, children }: Kids & { cls: string }) {
  return <div className={`flex shrink-0 items-center border-r-2 border-[#9f9f9f] whitespace-nowrap ${cls}`}>{children}</div>;
}

function StatusBar() {
  return (
    <footer className="flex h-[30px] shrink-0 bg-[#f0f0f0] pt-[3px] text-[17px] text-black">
      <Cell cls="w-[186px] pt-[6px] pl-[2px]">cMT3072 (1024 x 600)</Cell>
      <Cell cls="w-[215px]" />
      <div className="flex-1 border-r-2 border-[#9f9f9f]" />
      <Cell cls="w-[110px]" />
      <Cell cls="w-[110px]" />
      <Cell cls="w-[85px] pt-[6px] pl-[8px]">X = 270</Cell>
      <Cell cls="w-[85px] pt-[6px] pl-[8px]">Y = -197</Cell>
      <Cell cls="w-[31px]" />
      <Cell cls="w-[48px] pt-[6px] pl-[8px] text-[#a0a0a0]">CAP</Cell>
      <Cell cls="w-[56px] pt-[6px] pl-[8px] text-[#a0a0a0]">NUM</Cell>
      <Cell cls="w-[56px] pt-[6px] pl-[8px] text-[#a0a0a0]">SCRL</Cell>
      <div className="flex w-[217px] shrink-0 items-start pl-[8px]">
        <span className="w-[51px] leading-[30px] whitespace-nowrap">100 %</span>
        <button aria-label="Zoom out" className="ml-[2px] pt-[11px]"><Svg w={8} h={8}><path d="M0 4.500h8" stroke="#9a9a9a" /></Svg></button>
        <div className="ml-[3px] flex w-[100px] flex-col">
          <Svg w={100} h={8}>
            <path
              d="M8.500 2v5M16.500 2v3M24.500 2v3M32.500 2v3M39.500 2v3M46.500 2v3M54.500 2v3M61.500 2v3M69.500 2v3M77.500 2v3M84.500 2v3M92.500 2v5"
              stroke="#000"
            />
          </Svg>
          <input
            type="range"
            aria-label="Zoom"
            min={0}
            max={100}
            defaultValue={54}
            className="h-[18px] w-[100px] appearance-none bg-transparent [&::-webkit-slider-runnable-track]:h-[4px] [&::-webkit-slider-runnable-track]:border [&::-webkit-slider-runnable-track]:border-[#d0d0d0] [&::-webkit-slider-runnable-track]:bg-[#e7eaea] [&::-webkit-slider-thumb]:-mt-[8px] [&::-webkit-slider-thumb]:h-[19px] [&::-webkit-slider-thumb]:w-[10px] [&::-webkit-slider-thumb]:appearance-none [&::-webkit-slider-thumb]:rounded-t-[5px] [&::-webkit-slider-thumb]:bg-[#0078d7]"
          />
        </div>
        <button aria-label="Zoom in" className="ml-[4px] pt-[11px]"><Svg w={8} h={8}><path d="M0 4.500h8M4.500 0v8" stroke="#9a9a9a" /></Svg></button>
        <button aria-label="Fit to window" className="ml-[10px] pt-[8px]">
          <Svg w={16} h={16}>
            <path d="M1 5V1h4M11 1h4v4M15 11v4h-4M5 15H1v-4" fill="none" stroke="#909090" strokeWidth="1.500" />
            <path d="M8 1.500v4M8 10.500v4M1.500 8h4M10.500 8h4" stroke={BLUE} strokeWidth="1.500" />
            <path d="M6 3.500l2-2.500 2 2.500M6 12.500l2 2.500 2-2.500M3.500 6L1 8l2.500 2M12.500 6L15 8l-2.500 2" fill={BLUE} />
            <circle cx="8" cy="8" r="1.500" fill="#f08a3c" />
          </Svg>
        </button>
      </div>
    </footer>
  );
}

/* ---------- dialog ---------- */

const ENTRIES = ["C1 DATA TRANSFER : LB-6", "C2 DATA TRANSFER : LB-7", "C3 DATA TRANSFER : LB-8", "L123 DATA TRANSFER : LB-10"];
const btn = "h-[36px] rounded border bg-[#fdfdfd] text-[15px]";

function BackupDialog() {
  return (
    <div className="absolute inset-0 z-20 flex items-center justify-center pb-[2px]">
      <div
        role="dialog"
        aria-label="Backup (Global)"
        className="flex h-[657px] w-[989px] flex-col overflow-hidden rounded-lg border border-[#8f8f8f] bg-[#f0f0f0] shadow-[0_20px_50px_4px_rgba(0,0,0,0.36),0_0_30px_rgba(0,0,0,0.18)]"
      >
        <h2 className="h-[42px] shrink-0 bg-[#f2f3f5] pl-[10px] text-[17px] leading-[41px]">Backup (Global)</h2>
        <ul
          role="listbox"
          aria-label="Backup objects"
          className="mx-[7px] mt-[7px] mr-[10px] h-[536px] border border-[#828790] bg-white px-px pt-[2px] font-['DejaVu_Sans_Condensed','DejaVu_Sans',sans-serif] text-[16px] leading-[19px]"
        >
          {ENTRIES.map((e, i) => (
            <li
              key={e}
              role="option"
              aria-selected={i === 3}
              className={`flex h-[19px] pl-[2px] whitespace-nowrap ${i === 3 ? "bg-[#0078d7] text-white" : "text-black"}`}
            >
              <span className="w-[70px]">{i + 1}:</span>
              <span>Source : Data Sampling, Trigger address = [{e}]</span>
            </li>
          ))}
        </ul>
        <div className="mt-[21px] mr-[11px] ml-[8px] flex">
          <button className={`${btn} w-[140px] border-[#d2d2d2] border-b-[#b5b5b5]`}>New...</button>
          <button className={`${btn} ml-[6px] w-[140px] border-[#d2d2d2] border-b-[#b5b5b5]`}>Delete</button>
          <button className={`${btn} ml-[4px] w-[140px] border-[#d2d2d2] border-b-[#b5b5b5]`}>Settings...</button>
          <button className={`${btn} ml-auto w-[111px] border-[#0067c0]`}>Exit</button>
        </div>
      </div>
    </div>
  );
}

export default function App() {
  return (
    <div className="relative flex h-screen w-full flex-col overflow-hidden bg-[#ebeefc] font-['Open_Sans','Noto_Sans',sans-serif]">
      <TitleBar />
      <MenuBar />
      <Ribbon />
      <div className="h-[3px] shrink-0 border-b border-[#2b579a] bg-[#f0f0f0]" />
      <div className="flex min-h-0 flex-1">
        <LeftDock />
        <Editor />
        <RightDock />
      </div>
      <StatusBar />
      <BackupDialog />
    </div>
  );
}
